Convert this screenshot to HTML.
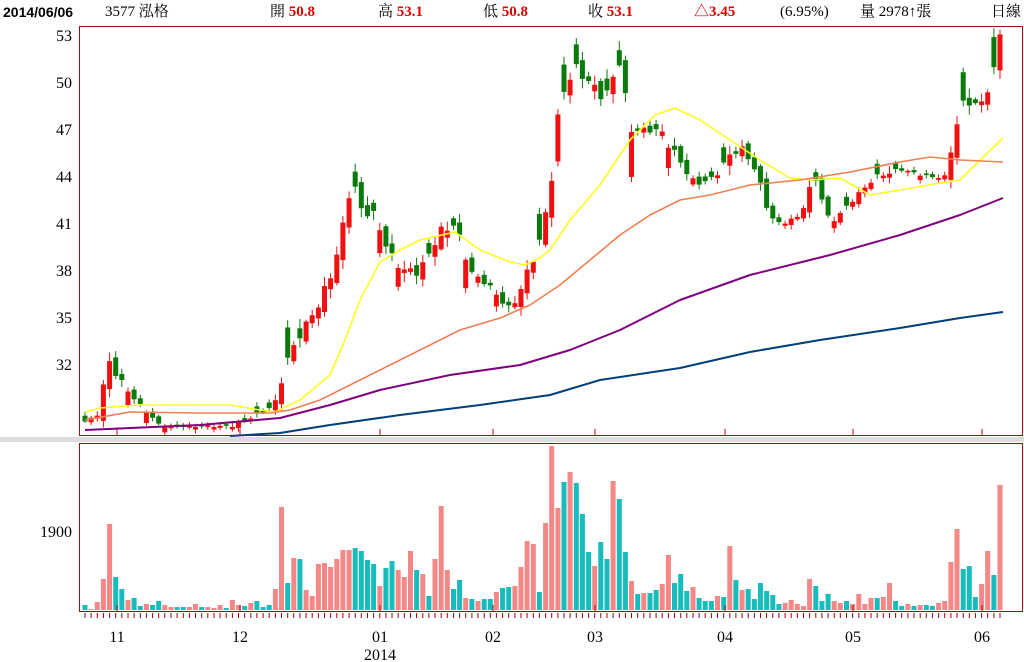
<!DOCTYPE html>
<html><head><meta charset="utf-8">
<style>
body{margin:0;background:#fff;width:1024px;height:662px;overflow:hidden;position:relative;font-family:"Liberation Serif","Noto Serif CJK SC","Noto Sans CJK TC",serif;}
.t{position:absolute;font-size:15px;color:#000;white-space:nowrap;top:4px;line-height:16px}
.r{color:#e00000;font-weight:bold}
svg{position:absolute;left:0;top:0}
</style></head><body>
<div class="t" style="left:3px;font-weight:bold;font-family:'Liberation Sans',sans-serif;font-size:14px">2014/06/06</div>
<div class="t" style="left:105px">3577 泓格</div>
<div class="t" style="left:270px">開 <span class="r">50.8</span></div>
<div class="t" style="left:378px">高 <span class="r">53.1</span></div>
<div class="t" style="left:483px">低 <span class="r">50.8</span></div>
<div class="t" style="left:588px">收 <span class="r">53.1</span></div>
<div class="t r" style="left:694px">△3.45</div>
<div class="t" style="left:780px">(6.95%)</div>
<div class="t" style="left:860px">量 2978↑張</div>
<div class="t" style="left:991px">日線</div>
<svg id="s" width="1024" height="662" xmlns="http://www.w3.org/2000/svg"></svg>
<script>
var s=document.getElementById('s');var h='';
function Y(p){return 36+(53-p)*15.67;}
function interp(pts,x){if(x<=pts[0][0])return pts[0][1];for(var i=1;i<pts.length;i++){if(x<=pts[i][0]){var a=pts[i-1],b=pts[i];return a[1]+(b[1]-a[1])*(x-a[0])/(b[0]-a[0]);}}return pts[pts.length-1][1];}
var kp=[[85,28.4],[97,28.8],[103,30.5],[110,32.3],[120,31],[135,29.8],[150,28.8],[160,28.1],[230,28.1],[260,28.9],[275,29.5],[285,32],[300,34],[320,36],[335,38.5],[345,41.5],[352,44],[360,42],[375,41.5],[390,39],[405,38],[420,38],[440,40.5],[455,41],[470,38],[490,37],[510,35.5],[522,37],[540,40],[550,43],[560,49],[575,51],[590,50],[605,49],[620,51.5],[630,47],[660,47],[680,45],[695,43.5],[715,44],[725,45],[740,46],[755,44.5],[770,41.5],[780,41],[800,41.5],[815,44],[830,41],[845,42],[860,43],[875,44],[900,44.5],[930,44],[945,44],[955,47],[965,49],[980,48.5],[993,50.5],[1000,52.5]];
var L="t5 r1 r8 r31 r86 t33 t21 r10 t12 t4 r6 t5 t9 r5 r3 t3 t3 r3 r6 t3 r3 r2 r5 t2 r10 r5 t4 r7 t9 t3 t5 r21 r103 t27 r52 t51 r20 r14 r46 r47 r43 r51 r60 r60 t62 t59 t50 t46 r24 t42 t49 r40 r33 r59 t40 r36 t14 r51 r104 r40 t21 t30 r12 t11 r9 t11 t11 r18 t22 t23 r24 r43 r69 r66 t18 r87 r164 r102 t128 r138 t127 t96 t58 r44 t68 t51 r129 t111 t58 r29 t16 r17 t17 t20 r26 r55 t27 t36 t19 r23 t12 t9 t9 r14 t13 r64 t30 r20 t21 t11 t27 t19 t15 t6 r7 r10 r6 r4 r31 t24 t9 t16 r9 r7 t9 r6 r16 r6 r12 t12 r13 r27 t9 t4 r6 t4 r5 t5 t4 r7 r9 r48 r81 t41 t44 t13 r26 r59 t35 r125".split(' ');
var n=L.length,sp=(1000-85)/(n-1);
h+='<rect x="0" y="437" width="1024" height="5" fill="#dcdcdc"/>';
var prev=null;
for(var i=0;i<n;i++){var x=85+i*sp;var c=L[i][0],v=+L[i].slice(1);
 var f=Math.min(1,v/40+0.15);
 var cl=interp(kp,x)+Math.sin(i*2.3)*0.3*f;
 var d=prev==null?0.3:Math.abs(cl-prev);d=Math.max(0.1,Math.min(d*1.1+0.15*f,3));
 var op=c=='r'?cl-d:cl+d; if(i==n-1){op=50.8;cl=53.1;}
 var hi=Math.max(op,cl)+0.1+Math.abs(Math.cos(i*1.7))*0.5*f,lo=Math.min(op,cl)-0.1-Math.abs(Math.sin(i*1.3))*0.5*f;
 var col=c=='r'?'#f01010':'#0a7a0a';
 h+='<line x1="'+x.toFixed(1)+'" x2="'+x.toFixed(1)+'" y1="'+Y(hi).toFixed(1)+'" y2="'+Y(lo).toFixed(1)+'" stroke="'+col+'" stroke-width="1"/>';
 var y1=Y(Math.max(op,cl)),y2=Y(Math.min(op,cl));
 h+='<rect x="'+(x-2.5).toFixed(1)+'" y="'+y1.toFixed(1)+'" width="5" height="'+Math.max(1.5,y2-y1).toFixed(1)+'" fill="'+col+'"/>';
 prev=cl;
 h+='<rect x="'+(x-2.5).toFixed(1)+'" y="'+(610-v)+'" width="5" height="'+v+'" fill="'+(c=='r'?'#f58787':'#17bdbd')+'"/>';
 h+='<line x1="'+x.toFixed(1)+'" x2="'+x.toFixed(1)+'" y1="613" y2="618" stroke="#a00000"/>';
}
function pl(p,c,w){h+='<polyline fill="none" stroke="'+c+'" stroke-width="'+w+'" stroke-linejoin="round" points="'+p.map(function(a){return a.join(',')}).join(' ')+'"/>';}
pl([[85,412],[100,408],[140,405],[230,405],[260,410],[275,412],[300,400],[330,375],[345,340],[360,300],[380,262],[400,250],[420,240],[455,232],[480,250],[510,262],[525,265],[540,258],[550,250],[570,220],[600,185],[630,140],[655,115],[675,108],[700,120],[730,140],[760,160],[790,178],[810,180],[840,178],[870,195],[900,190],[940,183],[960,180],[975,165],[1003,138]],'#ffff20',1.6);
pl([[85,420],[130,412],[200,413],[270,413],[290,410],[320,400],[350,385],[390,365],[430,345],[460,330],[500,318],[530,305],[560,285],[590,260],[620,235],[650,215],[680,200],[710,195],[750,185],[800,180],[850,172],[900,162],[930,157],[960,160],[1003,162]],'#f08050',1.6);
pl([[85,430],[200,425],[280,418],[330,405],[380,390],[450,375],[520,365],[570,350],[620,330],[680,300],[750,275],[830,255],[900,235],[960,215],[1003,198]],'#800080',2);
pl([[230,436],[280,433],[330,425],[400,415],[480,405],[550,395],[600,380],[680,368],[750,352],[820,340],[900,328],[960,318],[1003,312]],'#00407a',2);
h+='<rect x="79.5" y="26.5" width="943" height="409" fill="none" stroke="#9a1010"/>';
h+='<rect x="79.5" y="443.5" width="943" height="168" fill="none" stroke="#9a1010"/>';
var ms=[[117,'11'],[240,'12'],[380,'01'],[493,'02'],[595,'03'],[725,'04'],[853,'05'],[982,'06']];
ms.forEach(function(m){h+='<line x1="'+m[0]+'" x2="'+m[0]+'" y1="429" y2="435" stroke="#9a1010"/><line x1="'+m[0]+'" x2="'+m[0]+'" y1="605" y2="611" stroke="#9a1010"/>';
 h+='<text x="'+m[0]+'" y="642" text-anchor="middle" font-size="16" font-family="Liberation Serif,serif">'+m[1]+'</text>';});
h+='<text x="380" y="660" text-anchor="middle" font-size="16" font-family="Liberation Serif,serif">2014</text>';
[53,50,47,44,41,38,35,32].forEach(function(p){h+='<text x="72" y="'+(Y(p)+5).toFixed(0)+'" text-anchor="end" font-size="16" font-family="Liberation Serif,serif">'+p+'</text>';});
h+='<text x="72" y="537" text-anchor="end" font-size="16" font-family="Liberation Serif,serif">1900</text>';
s.innerHTML=h;
</script>
</body></html>
